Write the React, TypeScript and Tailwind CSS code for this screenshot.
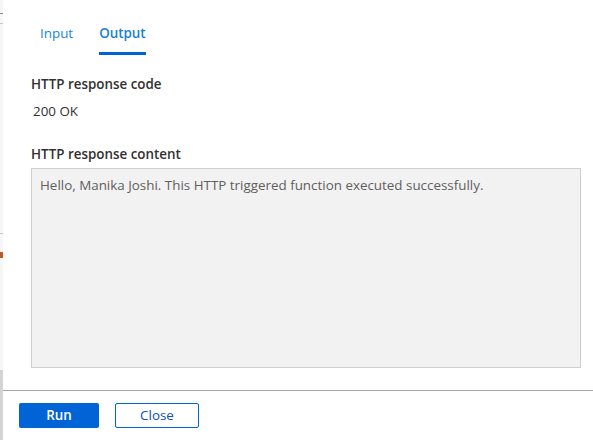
import React from 'react';

export default function App() {
  return (
    <div
      className="flex h-[440px] w-[593px] overflow-hidden bg-white text-[13.4px] text-[#323130]"
      style={{ fontFamily: '"Segoe UI", "Open Sans", "Noto Sans", sans-serif' }}
    >
      {/* strip of the page behind the panel */}
      <div className="flex w-[3px] flex-col bg-[#f6f6f6]">
        <div className="mt-[13px] h-px bg-[#8a8a8a]" />
        <div className="mt-[9px] h-px bg-[#c8c8c8]" />
        <div className="mt-[209px] h-px bg-[#c8c8c8]" />
        <div className="mt-[18px] h-[6px] bg-[#c0582c]" />
        <div className="mt-[112px] h-[74px] bg-[#d4d4d4]" />
      </div>

      <div className="flex flex-1 flex-col">
        {/* Tabs */}
        <div className="flex h-[55px] items-end gap-[26px] pl-[37px]">
          <button className="pb-[12px] text-[13.4px] text-[#1a86d9]">Input</button>
          <button className="border-b-[3px] border-[#0063d4] pb-[9px] text-[13.4px] font-semibold text-[#1a7fd4]">
            Output
          </button>
        </div>

        {/* Body */}
        <div className="flex flex-1 flex-col pl-[28px] pr-[10px]">
          <div className="mt-[20px] font-semibold leading-[18px]">HTTP response code</div>
          <div className="mt-[9px] pl-[2px] leading-[18px]">200 OK</div>
          <div className="mt-[25px] font-semibold leading-[18px]">HTTP response content</div>
          <div className="mt-[5px] h-[200px] w-[550px] border border-[#cfcfcf] bg-[#f2f2f2] px-[8px] py-[7px] leading-[18px] text-[#5f5e5d]">
            Hello, Manika Joshi. This HTTP triggered function executed successfully.
          </div>
        </div>

        {/* Footer */}
        <div className="h-px bg-[#a6a6a6]" />
        <div className="flex h-[49px] items-start gap-[16px] pl-[16px] pt-[12px]">
          <button className="h-[25px] w-[80px] rounded-[2px] bg-[#0063d6] text-[13.4px] font-semibold text-white">
            Run
          </button>
          <button className="h-[25px] w-[84px] rounded-[2px] border border-[#0063d6] bg-white text-[13.4px] text-[#0a4fc0]">
            Close
          </button>
        </div>
      </div>
    </div>
  );
}
